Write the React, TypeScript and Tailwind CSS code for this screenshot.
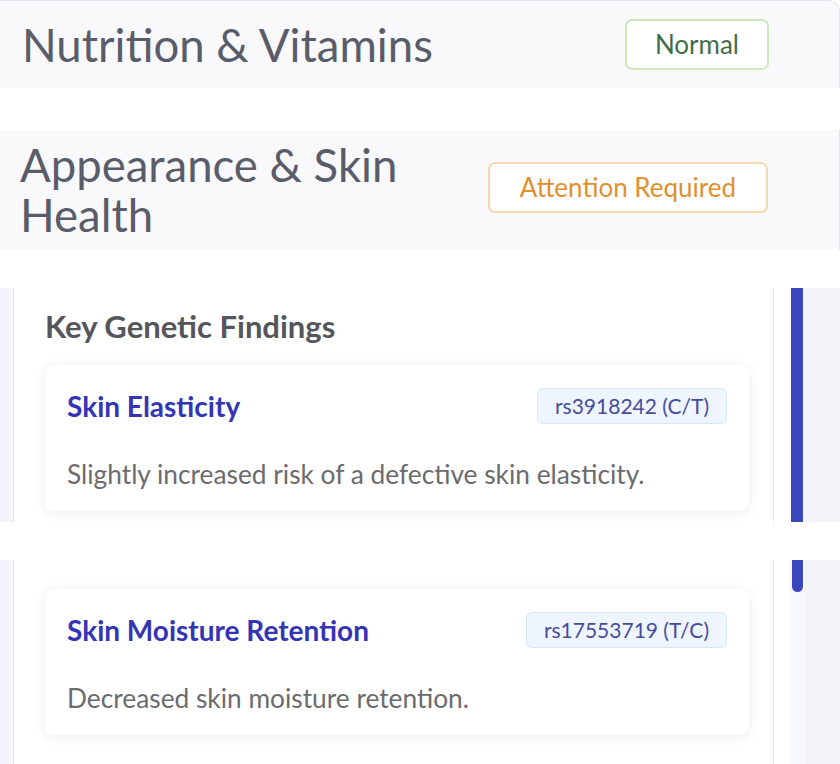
import React from "react";

const font = { fontFamily: "Lato, 'Noto Sans', sans-serif" };

function StatusBadge({
  label,
  tone,
  className = "",
}: {
  label: string;
  tone: "normal" | "attention";
  className?: string;
}) {
  return (
    <span
      className={`shrink-0 inline-flex items-center justify-center h-[51px] rounded-[7px] border-2 bg-white text-[26px] ${className} ${
        tone === "normal"
          ? "px-[28px] border-[#cfe6bd] text-[#3f6d48]"
          : "px-[30px] border-[#f4d9ae] text-[#e0902f]"
      }`}
    >
      {label}
    </span>
  );
}

function FindingCard({ title, rsid, text }: { title: string; rsid: string; text: string }) {
  return (
    <div className="bg-white rounded-[10px] shadow-[0_2px_14px_rgba(0,0,0,0.08)] pt-[23px] px-[22px] pb-[17px]">
      <div className="flex items-center justify-between h-[36px]">
        <span className="text-[28px] font-bold text-[#3434b4]">{title}</span>
        <span className="h-[36px] px-[17px] inline-flex items-center rounded-[6px] bg-[#eef5ff] border border-[#d7e6fb] text-[21px] text-[#464c9c]">
          {rsid}
        </span>
      </div>
      <p className="mt-[30px] leading-[40px] text-[26.3px] text-[#6b6b6e]">{text}</p>
    </div>
  );
}

function ScrollStrip({
  children,
  track,
  height,
}: {
  children: React.ReactNode;
  track: "top" | "end";
  height: string;
}) {
  return (
    <div className={`flex ${height}`}>
      <div className="w-[13px] bg-[#f4f5fb]" />
      <div className="w-[761px] bg-white border-l border-r border-[#e3e3ee] overflow-hidden pl-[31px] pr-[24px]">
        {children}
      </div>
      {track === "top" ? (
        <>
          <div className="w-[17px] bg-white" />
          <div className="w-[12px] bg-[#3a46be]" />
        </>
      ) : (
        <>
          <div className="w-[15px] bg-white" />
          <div className="w-[16px] bg-[#f8f9fe] pl-[3px]">
            <div className="w-[11px] h-[32px] rounded-b-full bg-[#3a46be]" />
          </div>
        </>
      )}
      <div className="flex-1 bg-[#f3f4fa]" />
    </div>
  );
}

export default function App() {
  return (
    <div className="w-[840px] h-[764px] bg-white overflow-hidden flex flex-col" style={font}>
      <div className="h-[88px] shrink-0 flex items-center justify-between bg-[#f9f9fb] border-t border-r border-[#e4e4ee] rounded-tr-[12px] pl-[22px] pr-[70px]">
        <h2 className="text-[45.5px] text-[#5a5d69] leading-none">Nutrition &amp; Vitamins</h2>
        <StatusBadge label="Normal" tone="normal" />
      </div>

      <div className="h-[120px] shrink-0 mt-[42px] flex items-center justify-between gap-[40px] bg-[#f9f9fb] border-r border-[#e4e4ee] pl-[20px] pr-[71px]">
        <h2 className="text-[45.5px] text-[#5a5d69] leading-[50px]">Appearance &amp; Skin Health</h2>
        <StatusBadge label="Attention Required" tone="attention" className="mb-[6px]" />
      </div>

      <div className="mt-[38px] shrink-0">
        <ScrollStrip track="top" height="h-[234px]">
          <h3 className="mt-[20px] text-[31px] font-bold text-[#55565c] leading-[36px]">
            Key Genetic Findings
          </h3>
          <div className="mt-[21px]">
            <FindingCard
              title="Skin Elasticity"
              rsid="rs3918242 (C/T)"
              text="Slightly increased risk of a defective skin elasticity."
            />
          </div>
        </ScrollStrip>
      </div>

      <div className="mt-[38px] shrink-0">
        <ScrollStrip track="end" height="h-[204px]">
          <div className="mt-[29px]">
            <FindingCard
              title="Skin Moisture Retention"
              rsid="rs17553719 (T/C)"
              text="Decreased skin moisture retention."
            />
          </div>
        </ScrollStrip>
      </div>
    </div>
  );
}
